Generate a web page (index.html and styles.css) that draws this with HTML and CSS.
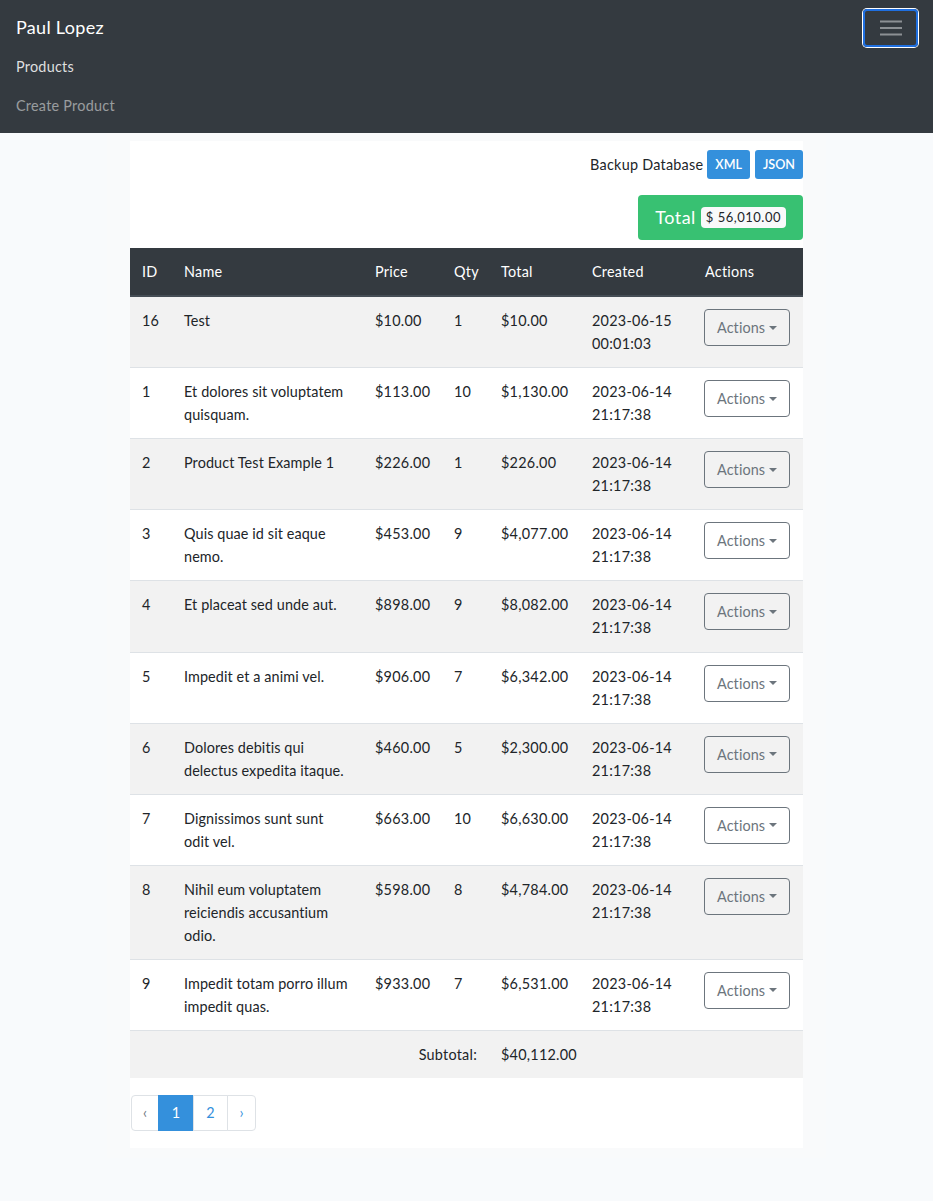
FILE: index.html
```html
<!DOCTYPE html>
<html lang="en">
<head>
<meta charset="utf-8">
<title>Products</title>
<link rel="stylesheet" href="styles.css">
</head>
<body>
<nav class="navbar">
  <div class="navbar-top">
    <a class="brand" href="#">Paul Lopez</a>
    <button class="toggler" type="button" aria-label="Toggle navigation">
      <svg width="22" height="16" viewBox="0 0 22 16"><path d="M0 1.5h22M0 8h22M0 14.5h22" stroke="#8c9094" stroke-width="2"/></svg>
    </button>
  </div>
  <ul class="nav">
    <li><a class="nav-link active" href="#">Products</a></li>
    <li><a class="nav-link" href="#">Create Product</a></li>
  </ul>
</nav>

<main class="container">
  <div class="card">
    <div class="backup">
      <span>Backup Database</span>
      <a class="btn-sm" href="#">XML</a>
      <a class="btn-sm" href="#">JSON</a>
    </div>
    <div class="total-row">
      <span class="total">Total <span class="badge">$ 56,010.00</span></span>
    </div>
    <table class="table">
      <colgroup>
        <col class="c-id"><col class="c-name"><col class="c-price"><col class="c-qty"><col class="c-total"><col class="c-created"><col class="c-actions">
      </colgroup>
      <thead>
        <tr><th>ID</th><th>Name</th><th>Price</th><th>Qty</th><th>Total</th><th>Created</th><th>Actions</th></tr>
      </thead>
      <tbody>
        <tr><td>16</td><td class="name">Test</td><td>$10.00</td><td>1</td><td>$10.00</td><td>2023-06-15 00:01:03</td><td><button class="btn-actions">Actions<span class="caret"></span></button></td></tr>
        <tr><td>1</td><td class="name">Et dolores sit voluptatem quisquam.</td><td>$113.00</td><td>10</td><td>$1,130.00</td><td>2023-06-14 21:17:38</td><td><button class="btn-actions">Actions<span class="caret"></span></button></td></tr>
        <tr><td>2</td><td class="name">Product Test Example 1</td><td>$226.00</td><td>1</td><td>$226.00</td><td>2023-06-14 21:17:38</td><td><button class="btn-actions">Actions<span class="caret"></span></button></td></tr>
        <tr><td>3</td><td class="name">Quis quae id sit eaque nemo.</td><td>$453.00</td><td>9</td><td>$4,077.00</td><td>2023-06-14 21:17:38</td><td><button class="btn-actions">Actions<span class="caret"></span></button></td></tr>
        <tr><td>4</td><td class="name">Et placeat sed unde aut.</td><td>$898.00</td><td>9</td><td>$8,082.00</td><td>2023-06-14 21:17:38</td><td><button class="btn-actions">Actions<span class="caret"></span></button></td></tr>
        <tr><td>5</td><td class="name">Impedit et a animi vel.</td><td>$906.00</td><td>7</td><td>$6,342.00</td><td>2023-06-14 21:17:38</td><td><button class="btn-actions">Actions<span class="caret"></span></button></td></tr>
        <tr><td>6</td><td class="name">Dolores debitis qui delectus expedita itaque.</td><td>$460.00</td><td>5</td><td>$2,300.00</td><td>2023-06-14 21:17:38</td><td><button class="btn-actions">Actions<span class="caret"></span></button></td></tr>
        <tr><td>7</td><td class="name">Dignissimos sunt sunt odit vel.</td><td>$663.00</td><td>10</td><td>$6,630.00</td><td>2023-06-14 21:17:38</td><td><button class="btn-actions">Actions<span class="caret"></span></button></td></tr>
        <tr><td>8</td><td class="name">Nihil eum voluptatem reiciendis accusantium odio.</td><td>$598.00</td><td>8</td><td>$4,784.00</td><td>2023-06-14 21:17:38</td><td><button class="btn-actions">Actions<span class="caret"></span></button></td></tr>
        <tr><td>9</td><td class="name">Impedit totam porro illum impedit quas.</td><td>$933.00</td><td>7</td><td>$6,531.00</td><td>2023-06-14 21:17:38</td><td><button class="btn-actions">Actions<span class="caret"></span></button></td></tr>
        <tr><td colspan="4" class="right">Subtotal:</td><td>$40,112.00</td><td colspan="2"></td></tr>
      </tbody>
    </table>
    <ul class="pagination">
      <li class="page prev disabled"><span>‹</span></li>
      <li class="page one active"><span>1</span></li>
      <li class="page two"><a href="#">2</a></li>
      <li class="page next"><a href="#">›</a></li>
    </ul>
  </div>
</main>
</body>
</html>
```

FILE: styles.css
```css
* { box-sizing: border-box; }
html, body { margin: 0; padding: 0; }
body {
  background: #f8fafc;
  font-family: Lato, "Noto Sans", sans-serif;
  font-size: 14.4px;
  line-height: 1.6;
  letter-spacing: 0.25px;
  color: #212529;
}
a { text-decoration: none; }

.navbar {
  background: #343a40;
  padding: 8px 16px;
}
.navbar-top {
  display: flex;
  justify-content: space-between;
  align-items: center;
  height: 39px;
}
.brand {
  color: #fff;
  font-size: 18px;
  line-height: 27px;
  letter-spacing: 0.3px;
}
.toggler {
  width: 55px;
  height: 38px;
  margin-right: -1px;
  background: transparent;
  border: 2px solid #1f6fe0;
  border-radius: 4px;
  box-shadow: 0 0 0 1px #fff;
  display: flex;
  align-items: center;
  justify-content: center;
  padding: 0;
}
.nav { list-style: none; margin: 0; padding: 0; }
.nav-link {
  display: block;
  padding: 8px 0;
  line-height: 23px;
  color: rgba(255,255,255,.5);
}
.nav-link.active { color: rgba(255,255,255,.85); }

.container {
  width: 719px;
  margin: 0 auto;
  padding: 8px 23px 10px;
  background: #f9fafb;
}
.card {
  background: #fff;
  padding-top: 9px;
}
.backup {
  display: flex;
  justify-content: flex-end;
  align-items: center;
  gap: 5px;
}
.backup span { margin-right: -1px; }
.btn-sm {
  display: inline-block;
  background: #3490dc;
  color: #fff;
  font-size: 12.6px;
  line-height: 19px;
  padding: 5px 8px;
  border-radius: 3px;
  font-weight: 600;
  letter-spacing: 0;
}
.total-row {
  display: flex;
  justify-content: flex-end;
  margin-top: 16px;
}
.total {
  display: inline-flex;
  align-items: center;
  background: #38c172;
  color: #fff;
  font-size: 18px;
  line-height: 27px;
  padding: 9px 17px;
  border-radius: 4px;
  gap: 5px;
  letter-spacing: 0.5px;
}
.badge {
  background: #f8f9fa;
  color: #212529;
  font-size: 13px;
  line-height: 19px;
  padding: 1px 5px;
  border-radius: 4px;
  letter-spacing: 0.5px;
}

.table {
  width: 100%;
  border-collapse: collapse;
  table-layout: fixed;
  margin-top: 8px;
}
.c-id { width: 42px; }
.c-name { width: 191px; }
.c-price { width: 79px; }
.c-qty { width: 47px; }
.c-total { width: 91px; }
.c-created { width: 113px; }
.c-actions { width: 110px; }
.table th, .table td {
  padding: 12px;
  text-align: left;
  vertical-align: top;
  line-height: 1.6;
  border-top: 1px solid #dee2e6;
}
.table td.name {
  letter-spacing: 0.1px;
  padding-right: 13px;
}
.table th {
  background: #343a40;
  color: #fff;
  font-weight: 400;
  border-top: 0;
  border-bottom: 2px solid #454d55;
}
.table tbody tr:nth-child(odd) td { background: #f2f2f2; }
.table td.right { text-align: right; }
.btn-actions {
  font: inherit;
  line-height: 23px;
  letter-spacing: 0.1px;
  color: #6c757d;
  background: transparent;
  border: 1px solid #6c757d;
  border-radius: 4px;
  padding: 6px 12px;
  margin: 0 0 0 -1px;
  display: inline-flex;
  align-items: center;
}
.caret {
  display: inline-block;
  margin-left: 4px;
  width: 0; height: 0;
  border-left: 4px solid transparent;
  border-right: 4px solid transparent;
  border-top: 4px solid #6c757d;
}

.pagination {
  list-style: none;
  display: flex;
  margin: 17px 0 0 1px;
  padding: 0 0 17px;
}
.page span, .page a {
  display: block;
  height: 36px;
  padding: 8px 0;
  line-height: 18px;
  border: 1px solid #dee2e6;
  margin-left: -1px;
  color: #3490dc;
  background: #fff;
  text-align: center;
  letter-spacing: 0;
}
.prev span { width: 28px; margin-left: 0; border-radius: 4px 0 0 4px; color: #6c757d; }
.one span { width: 36px; background: #3490dc; border-color: #3490dc; color: #fff; }
.two a { width: 35px; }
.next a { width: 29px; border-radius: 0 4px 4px 0; }
```
